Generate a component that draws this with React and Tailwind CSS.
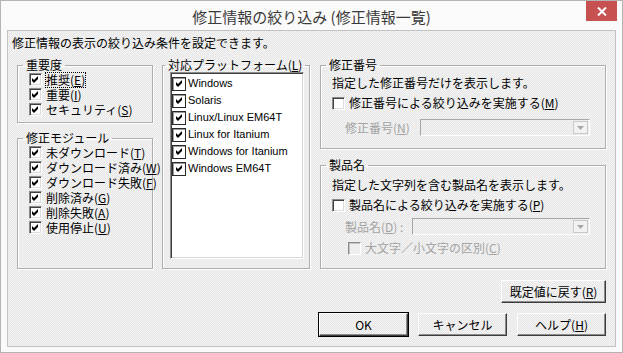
import React from "react";

const dither =
  "bg-[repeating-conic-gradient(#f3f3f3_0%_25%,#e7e7e7_0%_50%)] bg-[length:2px_2px]";
const jp = "font-['Noto_Sans_CJK_JP','Noto_Sans',sans-serif]";

function Check({ color = "#000" }) {
  return (
    <svg width="7" height="7" viewBox="0 0 7 7">
      <path d="M0 2 L2 4 L6 0 L6 3 L2 7 L0 5 Z" fill={color} />
    </svg>
  );
}

function Box({ checked, disabled, flat }) {
  if (flat) {
    return (
      <div className="w-[14px] h-[14px] shrink-0 border border-[#2a2a2a] bg-white shadow-[inset_1px_1px_0_#9a9a9a] flex items-center justify-center">
        {checked && <Check />}
      </div>
    );
  }
  return (
    <div
      className={
        "w-[13px] h-[13px] shrink-0 border border-t-[#8a8a8a] border-l-[#8a8a8a] border-r-white border-b-white flex items-center justify-center " +
        (disabled
          ? "bg-[#eeeeee] shadow-[inset_1px_1px_0_#c4c4c4]"
          : "bg-white shadow-[inset_1px_1px_0_#404040,inset_-1px_-1px_0_#dcdcdc]")
      }
    >
      {checked && <Check />}
    </div>
  );
}

function Acc({ k }) {
  return <span className="underline underline-offset-1">{k}</span>;
}

function CheckRow({ label, k, tail = ")", checked, disabled, focus, h = "h-[15px]" }) {
  return (
    <div className={"flex items-center gap-[4px] whitespace-nowrap " + h}>
      <Box checked={checked} disabled={disabled} />
      <span
        className={
          "leading-[14px] " +
          (disabled ? "text-[#a3a3a3] " : "text-black ") +
          (focus ? "outline-1 outline-dotted outline-black" : "")
        }
      >
        {label}(<Acc k={k} />
        {tail}
      </span>
    </div>
  );
}

function Group({ title, className = "", children }) {
  return (
    <fieldset
      className={
        "border border-[#adadad] shadow-[1px_1px_0_#fff,inset_1px_1px_0_#fff] px-[5px] m-0 min-w-0 " +
        className
      }
    >
      <legend className="px-[3px] leading-[14px] text-black whitespace-nowrap">{title}</legend>
      {children}
    </fieldset>
  );
}

function Combo({ width }) {
  return (
    <div
      className={
        "h-[17px] border border-t-[#a7a7a7] border-l-[#a7a7a7] border-r-white border-b-white flex justify-end p-[1px] " +
        width
      }
    >
      <div className="w-[15px] h-full border border-[#c9c9c9] bg-[#f2f2f2] flex items-center justify-center">
        <svg width="7" height="4" viewBox="0 0 7 4">
          <path d="M0 0 L7 0 L3.5 4 Z" fill="#a8a8a8" />
        </svg>
      </div>
    </div>
  );
}

function Button({ children, width = "w-[89px]", def }) {
  return (
    <button
      className={
        "h-[23px] border border-t-white border-l-white border-r-[#3c3c3c] border-b-[#3c3c3c] shadow-[inset_-1px_-1px_0_#8c8c8c] text-[12px] text-black leading-none whitespace-nowrap " +
        dither +
        " " +
        width +
        (def ? " outline-1 outline-black" : "")
      }
    >
      {children}
    </button>
  );
}

const platforms = [
  "Windows",
  "Solaris",
  "Linux/Linux EM64T",
  "Linux for Itanium",
  "Windows for Itanium",
  "Windows EM64T",
];

export default function App() {
  return (
    <div className={"w-[623px] h-[353px] border border-[#b4b4b4] bg-[#fafafa] flex flex-col text-[12px] whitespace-nowrap " + jp}>
      <div className="relative h-[29px] shrink-0 flex items-center justify-center">
        <span className="text-[15px] text-[#3a3a3a] leading-none pt-[1px]">
          修正情報の絞り込み (修正情報一覧)
        </span>
        <div className="absolute right-[5px] top-0 w-[31px] h-[20px] bg-[#c75050] flex items-center justify-center">
          <svg width="10" height="9" viewBox="0 0 10 9">
            <path d="M1 0.5 L9 8.5 M9 0.5 L1 8.5" stroke="#fff" strokeWidth="2" />
          </svg>
        </div>
      </div>

      <div className={"mx-[6px] mb-[5px] flex-1 border border-[#c2c2c2] flex flex-col pl-[4px] pr-[9px] " + dither}>
        <div className="pt-[5px] leading-[14px] text-black">
          修正情報の表示の絞り込み条件を設定できます。
        </div>

        <div className="mt-[8px] h-[211px] flex pl-[5px]">
          {/* left column */}
          <div className="w-[136px] flex flex-col">
            <Group title="重要度" className="h-[65px]">
              <div className="pl-[6px]">
                <CheckRow label="推奨" k="E" checked focus />
                <CheckRow label="重要" k="I" checked />
                <CheckRow label="セキュリティ" k="S" checked />
              </div>
            </Group>
            <Group title="修正モジュール" className="mt-[8px] flex-1">
              <div className="pl-[6px]">
                <CheckRow label="未ダウンロード" k="T" checked />
                <CheckRow label="ダウンロード済み" k="W" checked />
                <CheckRow label="ダウンロード失敗" k="F" checked />
                <CheckRow label="削除済み" k="G" checked />
                <CheckRow label="削除失敗" k="A" checked />
                <CheckRow label="使用停止" k="U" checked />
              </div>
            </Group>
          </div>

          {/* platforms */}
          <fieldset className="ml-[9px] w-[148px] border border-[#adadad] shadow-[1px_1px_0_#fff,inset_1px_1px_0_#fff] pl-[2px] pr-[5px] pb-[9px] m-0 min-w-0 flex flex-col">
            <legend className="px-[3px] leading-[14px] text-black whitespace-nowrap">
              対応プラットフォーム(<Acc k="L" />)
            </legend>
            <div className="ml-[5px] h-[187px] bg-white border border-t-[#8a8a8a] border-l-[#8a8a8a] border-r-white border-b-white shadow-[inset_1px_1px_0_#404040,inset_-1px_-1px_0_#d8d8d8] pt-[2px] pl-[1px]">
              {platforms.map((p) => (
                <div key={p} className="h-[17px] flex items-center gap-[2px]">
                  <Box checked flat />
                  <span className="font-['Liberation_Sans',sans-serif] text-[11px] text-black leading-none">
                    {p}
                  </span>
                </div>
              ))}
            </div>
          </fieldset>

          {/* right column */}
          <div className="ml-[10px] flex-1 flex flex-col">
            <Group title="修正番号" className="h-[91px]">
              <div className="pl-[6px]">
                <div className="mt-[4px] leading-[14px] text-black">
                  指定した修正番号だけを表示します。
                </div>
                <div className="mt-[6px]">
                  <CheckRow label="修正番号による絞り込みを実施する" k="M" h="h-[14px]" />
                </div>
                <div className="mt-[9px] pl-[13px] flex items-center">
                  <span className="w-[75px] text-[#a3a3a3] leading-[14px]">
                    修正番号(<Acc k="N" />)
                  </span>
                  <Combo width="w-[170px]" />
                </div>
              </div>
            </Group>
            <Group title="製品名" className="mt-[9px] flex-1">
              <div className="pl-[6px]">
                <div className="mt-[6px] leading-[14px] text-black">
                  指定した文字列を含む製品名を表示します。
                </div>
                <div className="mt-[6px]">
                  <CheckRow label="製品名による絞り込みを実施する" k="P" h="h-[14px]" />
                </div>
                <div className="mt-[6px] pl-[13px] flex items-center">
                  <span className="w-[67px] text-[#a3a3a3] leading-[14px]">
                    製品名(<Acc k="D" />) :
                  </span>
                  <Combo width="w-[178px]" />
                </div>
                <div className="mt-[6px] pl-[16px]">
                  <CheckRow label="大文字／小文字の区別" k="C" disabled h="h-[14px]" />
                </div>
              </div>
            </Group>
          </div>
        </div>

        <div className="mt-[11px] flex justify-end">
          <Button width="w-[105px]">
            既定値に戻す(<Acc k="R" />)
          </Button>
        </div>
        <div className="mt-[10px] flex justify-end gap-[10px]">
          <Button def>OK</Button>
          <Button>キャンセル</Button>
          <Button>
            ヘルプ(<Acc k="H" />)
          </Button>
        </div>
      </div>
    </div>
  );
}
